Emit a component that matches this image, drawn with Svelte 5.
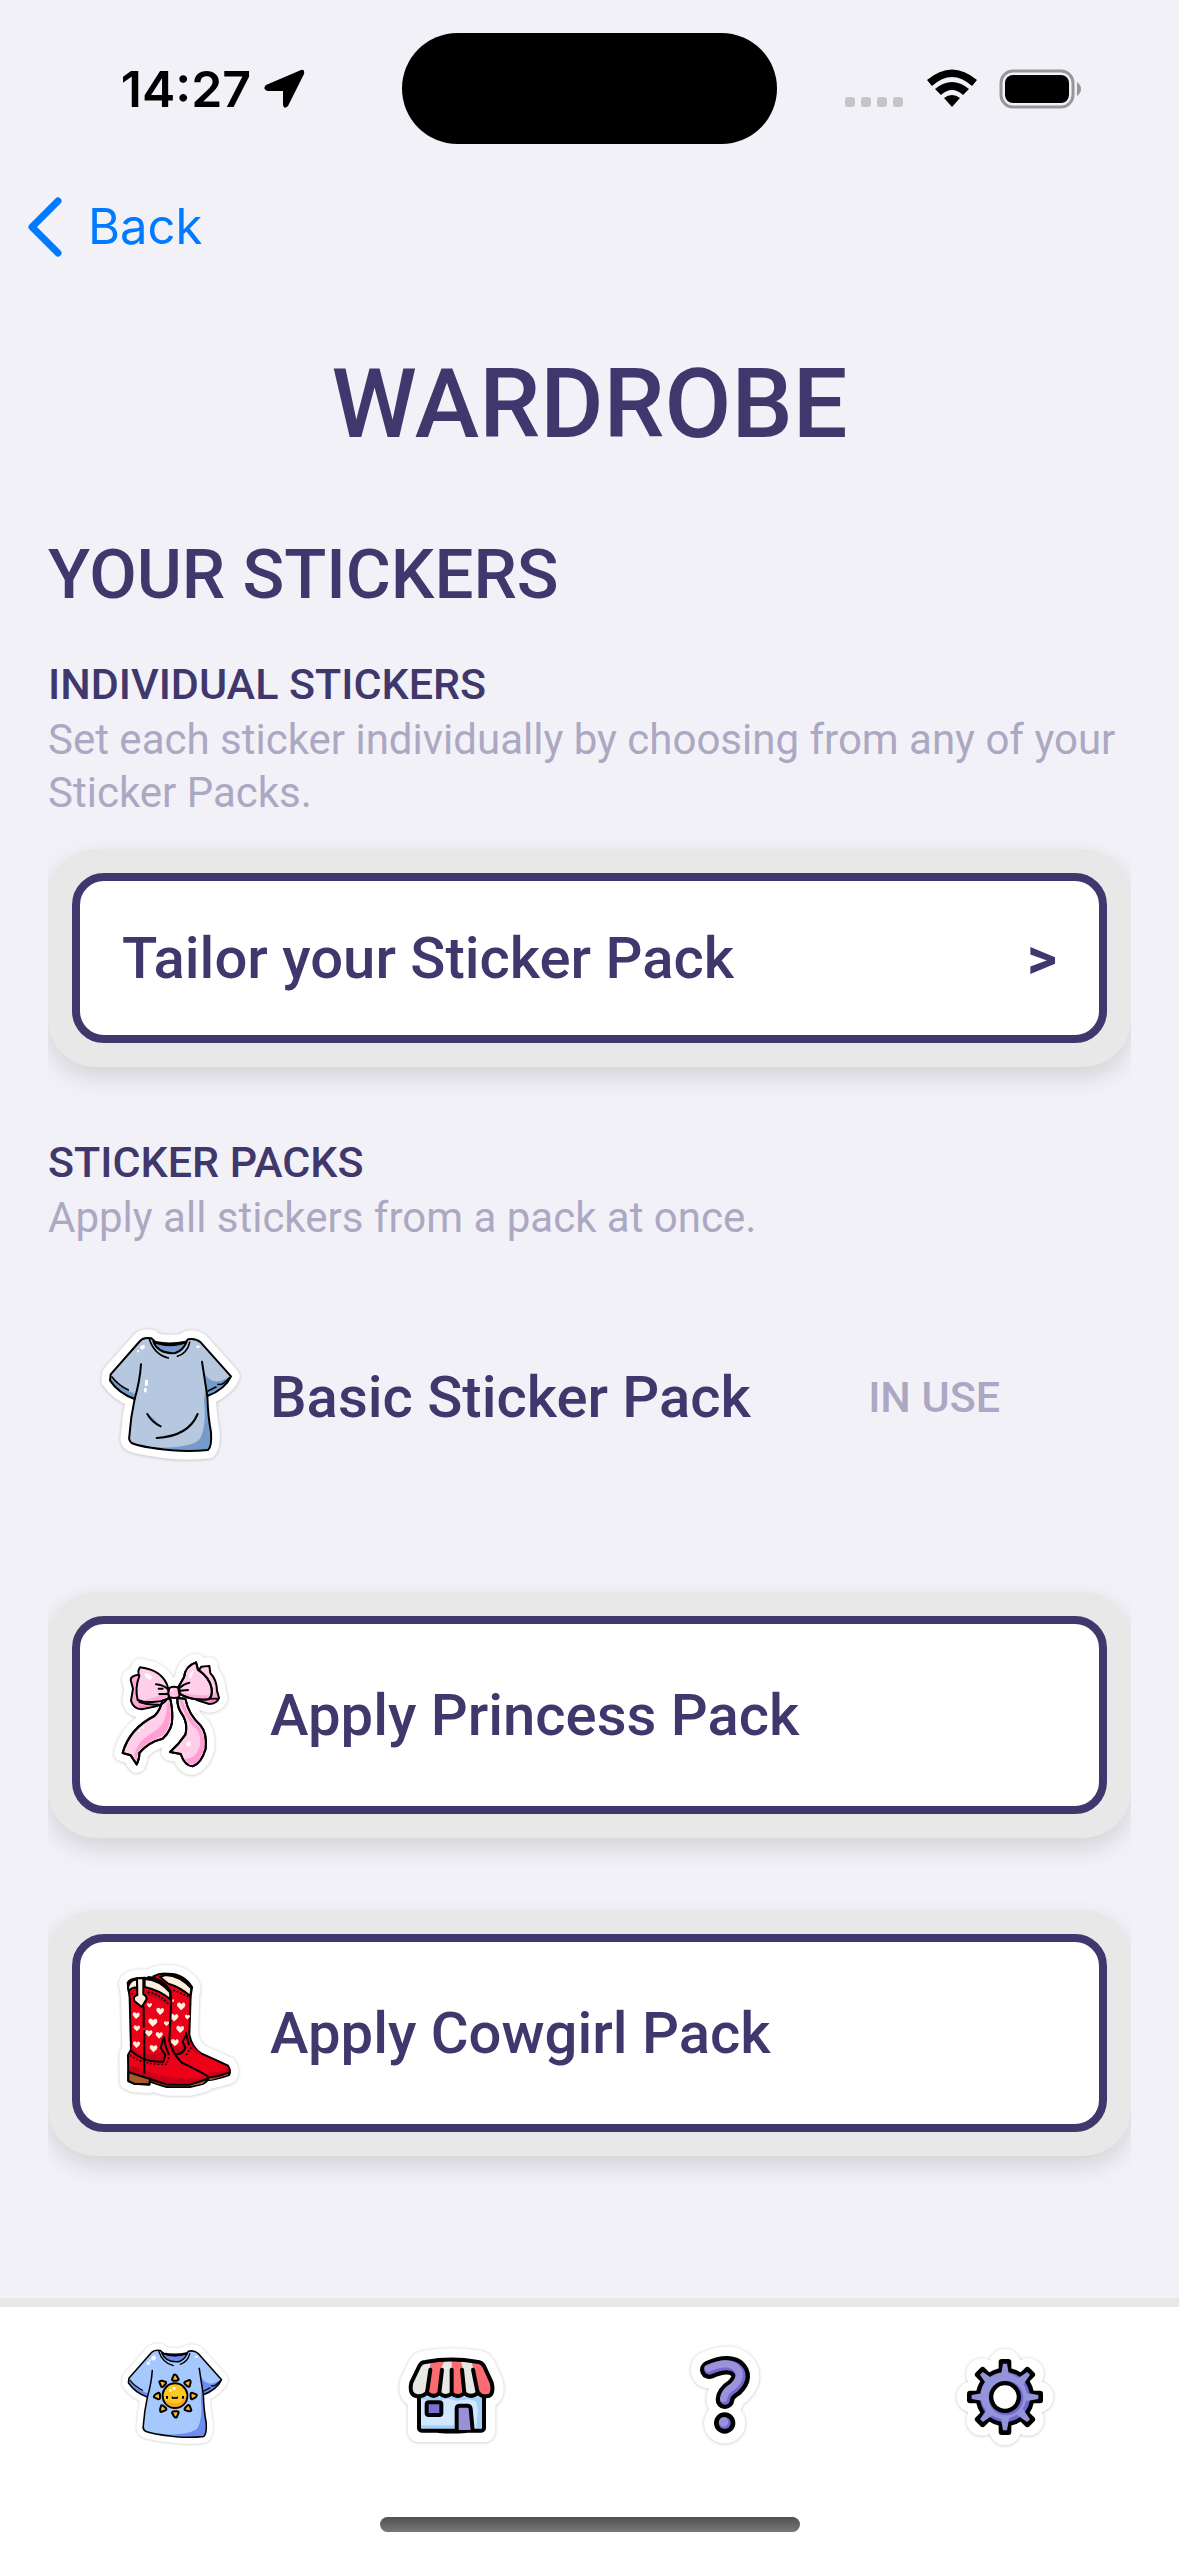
<script>
  let activePack = "basic";

  const packs = [
    { id: "basic", label: "Basic Sticker Pack", icon: "shirt" },
    { id: "princess", label: "Apply Princess Pack", icon: "bow" },
    { id: "cowgirl", label: "Apply Cowgirl Pack", icon: "boots" },
  ];

  const tabs = [
    { label: "Wardrobe", icon: "sunShirt", box: "-18 30 420 420" },
    { label: "Shop", icon: "shop", box: "1 0 420 420" },
    { label: "Help", icon: "question", box: "-6 0 420 420" },
    { label: "Settings", icon: "gear", box: "15 0 420 420" },
  ];

  const packBoxes = {
    shirt: "18 15 450 450",
    bow: "-12 6 450 450",
    boots: "-12 31 450 450",
  };

  // outlines, drawn once as the white sticker edge and once as the art
  const shirt =
    "M150 72 Q160 60 184 64 L196 75 Q240 84 288 74 L294 67 Q316 62 332 76 L423 178 Q405 217 352 237 Q354 300 363 345 Q366 390 354 399 Q300 405 245 400 Q150 390 125 378 Q115 370 118 358 Q122 300 134 246 Q85 228 60 190 L62 172 Z";
  const bowLeftBack =
    "M117 110 Q92 112 92 126 L99 152 L93 188 Q100 212 125 214 L168 205 Q192 198 202 182 Z";
  const bowLeft =
    "M120 88 Q111 100 118 114 Q104 150 113 186 Q135 195 165 191 Q190 190 206 180 L205 152 Q190 96 120 88 Z";
  const bowRightBack =
    "M298 94 L304 86 L328 84 L331 106 Q350 124 351 158 L357 180 Q350 197 328 198 L290 186 Z";
  const bowRight =
    "M235 148 L252 118 Q255 84 288 73 L294 95 Q330 120 335 152 Q338 176 325 184 Q270 188 237 166 Z";
  const tailLeft =
    "M187 188 Q180 218 163 234 Q88 272 68 345 L92 352 L110 379 Q119 360 118 345 Q145 312 188 302 Q218 276 217 238 Q217 205 210 180 Z";
  const tailRight =
    "M232 180 Q230 208 250 235 Q264 262 256 290 Q236 320 210 342 L242 348 Q254 384 278 385 Q304 376 317 332 Q322 285 300 260 Q266 230 256 182 Z";
  const bootFront =
    "M83 106 Q88 95 110 92 L134 90 Q180 92 211 130 L214 160 L208 280 Q218 318 245 345 Q290 366 322 385 Q327 400 310 408 L270 418 L200 418 Q170 410 150 402 L148 411 L102 408 L85 400 L84 322 L93 306 L89 150 Z";
  const bootBack =
    "M160 86 Q178 76 200 78 Q250 76 276 118 L272 145 L268 260 Q275 300 305 318 Q350 338 384 354 Q394 370 387 382 Q350 395 320 398 L200 340 Z";
  const awning =
    "M134 96 Q210 82 288 95 Q304 96 310 108 L333 158 Q342 199 316 199 Q302 200 292 188 Q272 206 251 190 Q232 206 213 191 Q194 206 176 190 Q158 206 139 188 Q128 200 110 199 Q84 196 92 158 L116 108 Q122 96 134 96 Z";
  const mark = "M148 119 Q200 96 228 113 Q258 138 224 172 Q196 190 195 209";

  const heart = "M0 9 L-9 -1 Q-10 -9 -4 -9 Q0 -8 1 -5 Q5 -11 9 -7 Q12 -3 8 2 Z";
  const frontHearts = [
    [108, 204, 11], [110, 242, 10], [109, 291, 11], [158, 225, 14], [180, 191, 12],
    [148, 173, 8], [146, 257, 11], [177, 263, 11], [160, 303, 12], [199, 228, 8],
  ];
  const backHearts = [
    [243, 176, 13], [222, 210, 13], [240, 245, 12], [224, 285, 12], [262, 208, 8], [216, 160, 6],
  ];
  const angles = [0, 45, 90, 135, 180, 225, 270, 315];

  function applyPack(id) {
    activePack = id;
  }
</script>

{#snippet shirtArt(body, shade, folds)}
  <path class="halo" d={shirt} />
  <path d={shirt} fill={body} />
  <path fill={shade} d="M340 165 Q360 200 392 192 L419 180 Q405 217 352 237 Z" />
  <path fill={shade} d="M62 180 Q85 212 134 230 V246 Q85 228 60 190 Z" />
  <path fill={shade} d="M346 210 Q354 300 363 345 Q366 390 354 399 Q300 405 200 392 Q310 392 330 365 Q350 330 342 250 Z" />
  <path class="ink" fill={shade} d="M190 74 Q240 96 290 74 Q280 100 256 108 Q205 112 190 74 Z" />
  <path class="ink" d="M196 76 Q240 92 288 76" />
  <path class="ink thin" d="M178 66 Q192 112 235 123 M299 76 Q292 108 262 118" />
  <path class="ink thin" d="M66 180 Q85 205 115 219 M418 182 Q398 206 384 202 M378 210 L354 222" />
  <path class="ink" d="M153 142 Q150 190 134 246 M336 134 Q346 200 352 237" />
  <path class="ink" d={shirt} />
  <path fill="#fff" d="M150 88 L163 83 L165 92 L154 99 Z M141 100 H147 V106 H141 Z M319 86 H329 V92 H319 Z" />
  {#if folds}
    <path fill={shade} d="M200 363 Q295 350 323 290 L312 312 Q285 350 230 354 Z M172 291 L190 303 L212 328 Z" />
    <path class="ink" d="M200 363 Q295 358 323 291 M172 291 Q185 315 212 328" />
    <path fill="#fff" d="M165 190 L174 188 V205 L165 208 Z M162 214 H170 V226 H162 Z" />
  {/if}
{/snippet}

{#snippet sticker(name, box)}
  <svg viewBox={box} aria-hidden="true">
    {#if name === "shirt"}
      {@render shirtArt("#b6c8df", "#759bcc", true)}
    {:else if name === "sunShirt"}
      <g transform="translate(9 42) scale(.77)">
        {@render shirtArt("#a5c8ff", "#6e8bf0", false)}
      </g>
      {#each angles as a}
        <path
          class="ink"
          fill="#fbb829"
          transform="translate(196 228) rotate({a})"
          d="M-4 -64 Q0 -66 4 -61 L10 -50 Q8 -45 0 -46 Q-10 -44 -10 -50 Z" />
      {/each}
      <circle class="ink" cx="195" cy="227" r="37" fill="#fdc820" />
      <path fill="#f7a52b" d="M229 220 Q232 258 195 261 Q170 260 164 240 Q185 256 208 248 Q226 240 229 220 Z" />
      <path fill="#fff" d="M188 201 H196 V209 H188 Z M178 208 H184 V215 H178 Z M124 113 L134 109 L139 115 L132 122 L124 119 Z M111 126 H119 V134 H111 Z" />
      <path d="M168 228 H174 V236 H168 Z M216 228 H222 V236 H216 Z" />
      <path class="ink thin" d="M187 232 Q189 237 194 233 Q199 237 202 232" />
    {:else if name === "bow"}
      <path class="halo" d="{bowLeftBack} {bowRightBack} {bowLeft} {bowRight} {tailLeft} {tailRight}" />
      <path class="ink" fill="#ffcfe9" d={tailLeft} />
      <path fill="#ff9fd2" d="M207 190 Q222 250 190 292 Q145 308 115 340 L110 368 L102 352 Q112 312 150 288 Q205 262 200 196 Z" />
      <path class="ink" fill="#ffcfe9" d={tailRight} />
      <path fill="#ff9fd2" d="M246 184 Q262 232 296 264 Q316 288 313 330 Q302 372 278 380 Q262 378 254 362 Q290 362 300 320 Q305 280 276 262 Q250 226 240 190 Z" />
      <path class="ink" fill="#ffa9d8" d={bowLeftBack} />
      <path class="ink" fill="#ffa9d8" d={bowRightBack} />
      <path fill="#ffcfe9" d="M306 90 L324 88 L328 108 Q344 126 346 158 L340 172 Q340 130 306 100 Z" />
      <path class="ink" fill="#ffcfe9" d={bowLeft} />
      <path class="ink" fill="#ffcfe9" d={bowRight} />
      <path fill="#ffa9d8" d="M125 188 Q170 180 202 160 V178 Q170 190 125 188 Z M242 162 Q290 176 328 170 Q326 182 310 182 Q265 182 242 162 Z" />
      <path class="ink" d="M168 139 Q188 140 203 153 M176 152 H188 M178 168 H204 M237 152 Q250 138 268 134 M240 158 L264 156 M118 192 Q145 202 175 200 M330 182 L352 182" />
      <path class="ink" fill="#ffc2e2" d="M208 150 Q222 142 236 150 Q242 164 237 178 Q222 182 208 178 Q202 164 208 150 Z" />
      <path fill="#fff" d="M134 106 Q150 106 158 118 Q154 128 142 122 Q132 116 134 106 Z M282 98 L272 122 L266 114 Q270 100 282 98 Z M258 316 L270 308 L272 320 L262 326 Z M115 275 h6 v6 h-6 Z M126 266 h6 v6 h-6 Z M212 154 h6 v6 h-6 Z" />
      <path fill="#ff7fc4" d="M325 186 L350 185 Q345 193 330 194 Z M112 203 L160 203 L125 210 Z" />
      <path class="ink" d={tailLeft} />
      <path class="ink" d={tailRight} />
      <path class="ink" d={bowRight} />
    {:else if name === "boots"}
      <path class="halo" d="{bootFront} {bootBack}" />
      <path class="ink" fill="#ee0018" d={bootBack} />
      <path fill="#c80019" d="M216 285 Q230 308 256 290 V312 Q240 325 220 322 Z M262 262 Q275 300 305 318 L290 318 Q262 300 258 270 Z M325 372 Q355 378 384 362 L387 372 L330 390 Z" />
      <path class="ink" fill="#ffeedd" d="M196 82 Q240 84 274 122 L271 145 Q240 118 205 108 L180 88 Z" />
      <path class="ink" fill="#c80019" d="M200 79 Q250 78 276 120 Q248 88 220 84 Z" />
      <path fill="#a65a2e" d="M325 392 L384 376 V382 L330 398 Z" />
      <path class="ink" d="M322 390 Q360 386 388 374 M258 255 L266 290 M216 320 Q250 322 256 300 L248 282 L258 262" />
      {#each backHearts as [x, y, r]}
        <path fill="#fff0e0" transform="translate({x} {y}) scale({r / 10})" d={heart} />
      {/each}
      <path class="ink" fill="#ee0018" d={bootFront} />
      <path fill="#c80019" d="M138 128 Q185 130 208 165 V180 Q180 150 138 142 Z M138 318 Q165 328 188 310 L192 338 Q160 344 138 334 Z M92 352 Q200 404 318 390 L300 404 L200 410 L90 372 Z M94 300 L130 325 V334 L96 318 Z" />
      <path fill="#ee0018" d="M94 345 Q150 368 200 384 Q260 394 300 386 L230 340 L150 345 Z" />
      <path class="ink" fill="#a65a2e" d="M85 373 L150 394 L148 410 L102 408 L85 400 Z" />
      <path fill="#a65a2e" d="M160 402 L205 412 H270 L318 398 L308 408 L270 416 H200 Z" />
      <path class="ink" d="M150 394 L200 411 H270 L322 394" />
      <path class="ink" fill="#ffeedd" d="M84 118 Q90 97 112 94 V120 Q96 118 86 130 Z" />
      <path class="ink" fill="#ffeedd" d="M134 94 Q178 96 210 134 L211 155 Q180 128 134 118 Z" />
      <path class="ink" fill="#c80019" d="M145 88 Q190 92 212 132 Q190 104 145 92 Z" />
      <path class="ink" fill="#ffeedd" d="M111 92 H130 V140 Q140 144 140 154 L125 178 L103 160 Q98 146 112 142 Z" />
      <path class="ink" d="M131 178 V238 M133 250 V375 M92 308 Q130 346 190 342 L196 322 L182 300 L192 268 L196 292 L206 320" />
      <path class="ink dots" d="M146 134 Q180 140 206 170 M92 324 Q130 352 200 350 L208 325 M96 138 L104 140 M222 128 L268 148 M260 320 L274 298" />
      {#each frontHearts as [x, y, r]}
        <path fill="#fff0e0" transform="translate({x} {y}) scale({r / 10})" d={heart} />
      {/each}
    {:else if name === "shop"}
      <path class="halo bold" d="{awning} M115 190 H310 V303 H115 Z" />
      <rect x="115" y="180" width="195" height="122" rx="8" fill="#d1e7ff" />
      <path fill="#a3d0f6" d="M120 202 H305 V296 H286 L292 240 L286 214 L262 208 L230 212 L200 206 L165 212 L120 208 Z M120 286 H220 V298 H120 Z" />
      <rect class="ink bold" x="115" y="180" width="195" height="122" rx="8" />
      <path class="ink bold" d="M175 303 Q212 306 255 303" />
      <rect class="ink bold" x="138" y="217" width="44" height="38" rx="6" fill="#7b6fd6" />
      <path class="ink bold" fill="#9a90da" d="M228 300 V236 Q228 227 238 227 H260 Q269 227 270 236 L276 300" />
      <path fill="#e7e8e6" d={awning} />
      <path fill="#fb6c72" d="M151 92 H192 L183 110 L176 192 Q158 204 139 190 L148 110 Z M213 90 H240 L245 110 L251 190 Q232 204 213 190 Z M272 92 Q304 96 310 108 L333 158 Q342 199 316 199 Q302 200 291 188 L278 116 Z" />
      <path class="ink bold" d="M149 119 L139 188 M184 119 L176 188 M213 119 V188 M244 119 L251 188 M277 119 L291 188" />
      <path class="ink bold" d={awning} />
    {:else if name === "question"}
      <g class="shadow">
        <path d={mark} fill="none" stroke="#fff" stroke-width="112" stroke-linecap="round" />
        <circle cx="194" cy="279" r="62" fill="#fff" />
      </g>
      <path d={mark} fill="none" stroke="#000" stroke-width="56" stroke-linecap="round" stroke-linejoin="round" />
      <path d={mark} fill="none" stroke="#7468d2" stroke-width="30" stroke-linecap="round" stroke-linejoin="round" />
      <path d={mark} fill="none" stroke="#9a92dc" stroke-width="22" stroke-linecap="round" transform="translate(-4 -4)" />
      <circle cx="194" cy="279" r="32" />
      <circle cx="194" cy="279" r="18" fill="#7468d2" />
      <circle cx="191" cy="276" r="14" fill="#9a92dc" />
    {:else if name === "gear"}
      <g class="shadow" fill="#fff">
        <circle cx="225" cy="201" r="110" />
        {#each angles as a}
          <circle cx="225" cy="103" r="47" transform="rotate({a} 225 201)" />
        {/each}
      </g>
      <circle cx="225" cy="201" r="88" />
      {#each angles as a}
        <rect x="206" y="87" width="38" height="50" rx="9" transform="rotate({a} 225 201)" />
      {/each}
      <circle cx="225" cy="201" r="75" fill="#7468d2" />
      {#each angles as a}
        <path fill="#9494da" d="M219 101 H231 L238 140 H212 Z" transform="rotate({a} 225 201)" />
      {/each}
      <circle cx="221" cy="197" r="69" fill="#9494da" />
      <circle cx="228" cy="204" r="52" fill="#7468d2" />
      <circle cx="225" cy="201" r="48" />
      <circle cx="225" cy="201" r="35" fill="#fff" />
    {/if}
  </svg>
{/snippet}

<div class="screen">
  <header>
    <div class="status">
      <div class="clock">
        <span>14:27</span>
        <svg width="42" height="40" viewBox="0 0 42 40" aria-hidden="true">
          <path d="M38 1 Q42 0 41 5 L25 37 Q21 41 20 36 V22 H5 Q-1 20 3 16 Z" />
        </svg>
      </div>
      <div class="island"></div>
      <div class="signals">
        <svg width="60" height="40" viewBox="0 0 60 40" fill="#c5c5c8" aria-hidden="true">
          <rect x="0" y="28" width="10" height="10" rx="3" />
          <rect x="16" y="28" width="10" height="10" rx="3" />
          <rect x="32" y="28" width="10" height="10" rx="3" />
          <rect x="48" y="28" width="10" height="10" rx="3" />
        </svg>
        <svg width="52" height="40" viewBox="0 0 52 40" aria-hidden="true">
          <path d="M1 11 Q26 -10 51 11 L46 17 Q26 -1 6 17 Z" />
          <path d="M9 20 Q26 6 43 20 L37 26 Q26 16 15 26 Z" />
          <path d="M18 29 Q26 23 34 29 L26 38 Z" />
        </svg>
        <svg width="82" height="40" viewBox="0 0 82 40" aria-hidden="true">
          <rect x="2" y="2" width="72" height="36" rx="12" fill="none" stroke="#97979a" stroke-width="3" />
          <rect x="6" y="6" width="64" height="28" rx="8" />
          <path d="M78 13 Q82 16 82 20 Q82 24 78 27 Z" fill="#97979a" />
        </svg>
      </div>
    </div>
    <button class="back">
      <svg width="38" height="60" viewBox="0 0 38 60" aria-hidden="true">
        <path d="M32 4 L6 30 L32 56" fill="none" stroke="#007aff" stroke-width="7" stroke-linecap="round" stroke-linejoin="round" />
      </svg>
      Back
    </button>
  </header>

  <main>
    <h1>WARDROBE</h1>
    <h2>YOUR STICKERS</h2>

    <section>
      <h3>INDIVIDUAL STICKERS</h3>
      <p>Set each sticker individually by choosing from any of your Sticker Packs.</p>
      <div class="panel">
        <button class="card tailor">
          <span>Tailor your Sticker Pack</span>
          <span class="arrow">&gt;</span>
        </button>
      </div>
    </section>

    <section>
      <h3>STICKER PACKS</h3>
      <p>Apply all stickers from a pack at once.</p>
      <div class="packs">
        {#each packs as pack}
          {#if pack.id === activePack}
            <div class="current">
              {@render sticker(pack.icon, packBoxes[pack.icon])}
              <span>{pack.label}</span>
              <span class="in-use">IN USE</span>
            </div>
          {:else}
            <div class="panel">
              <button class="card" on:click={() => applyPack(pack.id)}>
                {@render sticker(pack.icon, packBoxes[pack.icon])}
                <span>{pack.label}</span>
              </button>
            </div>
          {/if}
        {/each}
      </div>
    </section>
  </main>

  <footer>
    <nav>
      {#each tabs as tab}
        <a href="#{tab.icon}" aria-label={tab.label}>{@render sticker(tab.icon, tab.box)}</a>
      {/each}
    </nav>
    <div class="home"></div>
  </footer>
</div>

<style>
  :global(body) {
    background: #f2f1f7;
  }

  .screen {
    display: flex;
    flex-direction: column;
    min-height: 100vh;
    font-family: Roboto, "Liberation Sans", sans-serif;
    font-weight: 500;
    color: #40386d;
  }

  button {
    font: inherit;
    color: inherit;
    text-align: left;
    cursor: pointer;
  }

  svg {
    display: block;
    flex: none;
  }

  .status {
    display: grid;
    grid-template-columns: 1fr 375px 1fr;
    align-items: center;
    height: 177px;
    font: 600 50px/60px Inter, sans-serif;
    color: #000;
  }

  .clock {
    display: flex;
    align-items: center;
    justify-content: center;
    gap: 12px;
    padding-left: 24px;
  }

  .island {
    height: 111px;
    border-radius: 56px;
    background: #000;
  }

  .signals {
    display: flex;
    align-items: center;
    justify-content: center;
    gap: 21px;
    padding-right: 30px;
  }

  .back {
    display: flex;
    align-items: center;
    gap: 24px;
    height: 100px;
    padding: 0 26px;
    border: none;
    background: none;
    font: 400 49px/60px Inter, sans-serif;
    color: #007aff;
  }

  main {
    flex: 1;
    padding: 69px 48px;
  }

  h1,
  h2,
  h3,
  p {
    margin: 0;
    font-weight: 500;
  }

  h1 {
    font-size: 97px;
    line-height: 116px;
    text-align: center;
  }

  h2 {
    margin: 71px 0 40px;
    font-size: 69px;
    line-height: 84px;
  }

  h3 {
    margin-bottom: 2px;
    font-size: 43px;
    line-height: 54px;
  }

  p {
    margin-bottom: 30px;
    font-size: 42px;
    font-weight: 400;
    line-height: 53px;
    color: #aca8c3;
  }

  section + section {
    margin-top: 68px;
  }

  .panel {
    padding: 24px;
    border-radius: 48px;
    background: #e8e8e8;
    box-shadow: 0 10px 24px rgba(0, 0, 0, 0.13);
    clip-path: inset(-40px 0);
  }

  .card,
  .current {
    display: flex;
    align-items: center;
    gap: 24px;
    font-size: 58px;
    line-height: 72px;
  }

  .card {
    box-sizing: border-box;
    width: 100%;
    padding: 16px;
    border: 8px solid #40386d;
    border-radius: 32px;
    background: #fff;
  }

  .card svg,
  .current svg {
    width: 150px;
    height: 150px;
  }

  .card.tailor {
    justify-content: space-between;
    padding: 41px 42px;
  }

  .arrow {
    font-weight: 700;
  }

  .packs {
    display: grid;
    gap: 72px;
  }

  .current {
    padding: 48px;
  }

  .in-use {
    margin-left: auto;
    padding-right: 83px;
    font-size: 43px;
    color: #aca8c3;
  }

  footer {
    border-top: 9px solid #e8e8e8;
    background: #fff;
  }

  nav {
    display: flex;
    padding: 23px 36px 47px;
  }

  nav a {
    display: flex;
    flex: 1;
    justify-content: center;
  }

  nav svg {
    width: 140px;
    height: 140px;
  }

  .home {
    width: 420px;
    height: 15px;
    margin: 0 auto 24px;
    border-radius: 8px;
    background: linear-gradient(#505050, #787878);
  }

  .halo {
    fill: #fff;
    stroke: #fff;
    stroke-width: 52;
    stroke-linejoin: round;
    filter: drop-shadow(0 1px 4px rgba(0, 0, 0, 0.25));
  }

  .halo.bold {
    stroke-width: 68;
  }

  .shadow {
    filter: drop-shadow(0 1px 4px rgba(0, 0, 0, 0.25));
  }

  .ink {
    stroke: #000;
    stroke-width: 6;
    stroke-linecap: round;
    stroke-linejoin: round;
  }

  .ink:not([fill]) {
    fill: none;
  }

  .ink.thin {
    stroke-width: 5;
  }

  .ink.bold {
    stroke-width: 12;
  }

  .ink.dots {
    stroke-width: 5;
    stroke-dasharray: 1 10;
  }
</style>
